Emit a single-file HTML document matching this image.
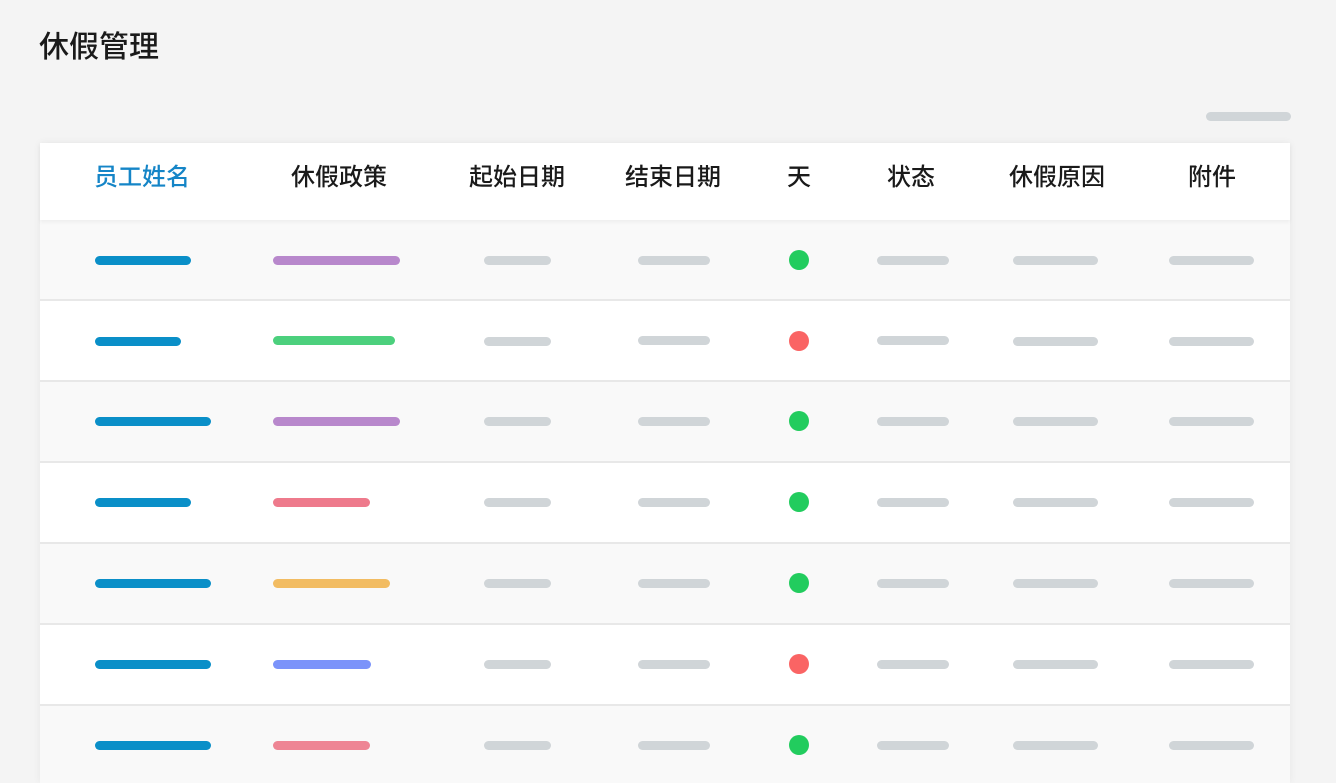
<!DOCTYPE html>
<html style="width:1336px;height:783px;overflow:hidden"><head><meta charset="utf-8"><style>
*{margin:0;padding:0;box-sizing:border-box}
body{width:1336px;height:783px;background:#f4f4f4;position:relative;overflow:hidden;font-family:"Liberation Sans","Noto Sans CJK SC",sans-serif}
.t{position:absolute;left:39px;top:28px;font-size:30px;color:#1a1a1a;line-height:40px;font-weight:500}
.tb{position:absolute;left:40px;top:143px;width:1250px;height:640px;background:#fff;box-shadow:0 0 8px rgba(0,0,0,.06)}
.hd{position:absolute;left:40px;top:143px;width:1250px;height:77px;background:#fff;box-shadow:0 2px 4px rgba(0,0,0,.05);z-index:2}
.h{position:absolute;top:162px;font-size:24px;line-height:32px;color:#1a1a1a;transform:translateX(-50%);white-space:nowrap;z-index:3;font-weight:500}
.r{position:absolute;left:40px;width:1250px;height:81px;border-bottom:2px solid #e8e8e8}
.b{position:absolute;height:9px;border-radius:5px}
.g{background:#d0d5d8}
.d{position:absolute;width:20px;height:20px;border-radius:50%;left:789px}
.n{background:#0a8fc8}
</style></head><body>
<div class="t">休假管理</div>
<div class="b g" style="left:1206px;top:112px;width:85px"></div>
<div class="tb"></div>
<div class="hd"></div>
<div class="h" style="left:142px;color:#1585c7">员工姓名</div>
<div class="h" style="left:339px">休假政策</div>
<div class="h" style="left:517px">起始日期</div>
<div class="h" style="left:673px">结束日期</div>
<div class="h" style="left:799px">天</div>
<div class="h" style="left:911px">状态</div>
<div class="h" style="left:1057px">休假原因</div>
<div class="h" style="left:1212px">附件</div>

<div class="r" style="top:220px;background:#f9f9f9"></div>
<div class="r" style="top:301px;background:#fff"></div>
<div class="r" style="top:382px;background:#f9f9f9"></div>
<div class="r" style="top:463px;background:#fff"></div>
<div class="r" style="top:544px;background:#f9f9f9"></div>
<div class="r" style="top:625px;background:#fff"></div>
<div class="r" style="top:706px;background:#f9f9f9"></div>

<div class="b n" style="left:95px;top:256px;width:96px"></div>
<div class="b" style="left:273px;top:256px;width:127px;background:#b888cc"></div>
<div class="d" style="top:250px;background:#22cc5e"></div>
<div class="b n" style="left:95px;top:337px;width:86px"></div>
<div class="b" style="left:273px;top:336px;width:122px;background:#4cd07d"></div>
<div class="d" style="top:331px;background:#fa6464"></div>
<div class="b n" style="left:95px;top:417px;width:116px"></div>
<div class="b" style="left:273px;top:417px;width:127px;background:#b888cc"></div>
<div class="d" style="top:411px;background:#22cc5e"></div>
<div class="b n" style="left:95px;top:498px;width:96px"></div>
<div class="b" style="left:273px;top:498px;width:97px;background:#ee7a8c"></div>
<div class="d" style="top:492px;background:#22cc5e"></div>
<div class="b n" style="left:95px;top:579px;width:116px"></div>
<div class="b" style="left:273px;top:579px;width:117px;background:#f2bc62"></div>
<div class="d" style="top:573px;background:#22cc5e"></div>
<div class="b n" style="left:95px;top:660px;width:116px"></div>
<div class="b" style="left:273px;top:660px;width:98px;background:#7b93fa"></div>
<div class="d" style="top:654px;background:#fa6464"></div>
<div class="b n" style="left:95px;top:741px;width:116px"></div>
<div class="b" style="left:273px;top:741px;width:97px;background:#ee8594"></div>
<div class="d" style="top:735px;background:#22cc5e"></div>

<div class="b g" style="left:484px;top:256px;width:67px"></div><div class="b g" style="left:638px;top:256px;width:72px"></div><div class="b g" style="left:877px;top:256px;width:72px"></div><div class="b g" style="left:1013px;top:256px;width:85px"></div><div class="b g" style="left:1169px;top:256px;width:85px"></div>
<div class="b g" style="left:484px;top:337px;width:67px"></div><div class="b g" style="left:638px;top:336px;width:72px"></div><div class="b g" style="left:877px;top:336px;width:72px"></div><div class="b g" style="left:1013px;top:337px;width:85px"></div><div class="b g" style="left:1169px;top:337px;width:85px"></div>
<div class="b g" style="left:484px;top:417px;width:67px"></div><div class="b g" style="left:638px;top:417px;width:72px"></div><div class="b g" style="left:877px;top:417px;width:72px"></div><div class="b g" style="left:1013px;top:417px;width:85px"></div><div class="b g" style="left:1169px;top:417px;width:85px"></div>
<div class="b g" style="left:484px;top:498px;width:67px"></div><div class="b g" style="left:638px;top:498px;width:72px"></div><div class="b g" style="left:877px;top:498px;width:72px"></div><div class="b g" style="left:1013px;top:498px;width:85px"></div><div class="b g" style="left:1169px;top:498px;width:85px"></div>
<div class="b g" style="left:484px;top:579px;width:67px"></div><div class="b g" style="left:638px;top:579px;width:72px"></div><div class="b g" style="left:877px;top:579px;width:72px"></div><div class="b g" style="left:1013px;top:579px;width:85px"></div><div class="b g" style="left:1169px;top:579px;width:85px"></div>
<div class="b g" style="left:484px;top:660px;width:67px"></div><div class="b g" style="left:638px;top:660px;width:72px"></div><div class="b g" style="left:877px;top:660px;width:72px"></div><div class="b g" style="left:1013px;top:660px;width:85px"></div><div class="b g" style="left:1169px;top:660px;width:85px"></div>
<div class="b g" style="left:484px;top:741px;width:67px"></div><div class="b g" style="left:638px;top:741px;width:72px"></div><div class="b g" style="left:877px;top:741px;width:72px"></div><div class="b g" style="left:1013px;top:741px;width:85px"></div><div class="b g" style="left:1169px;top:741px;width:85px"></div>
</body></html>
